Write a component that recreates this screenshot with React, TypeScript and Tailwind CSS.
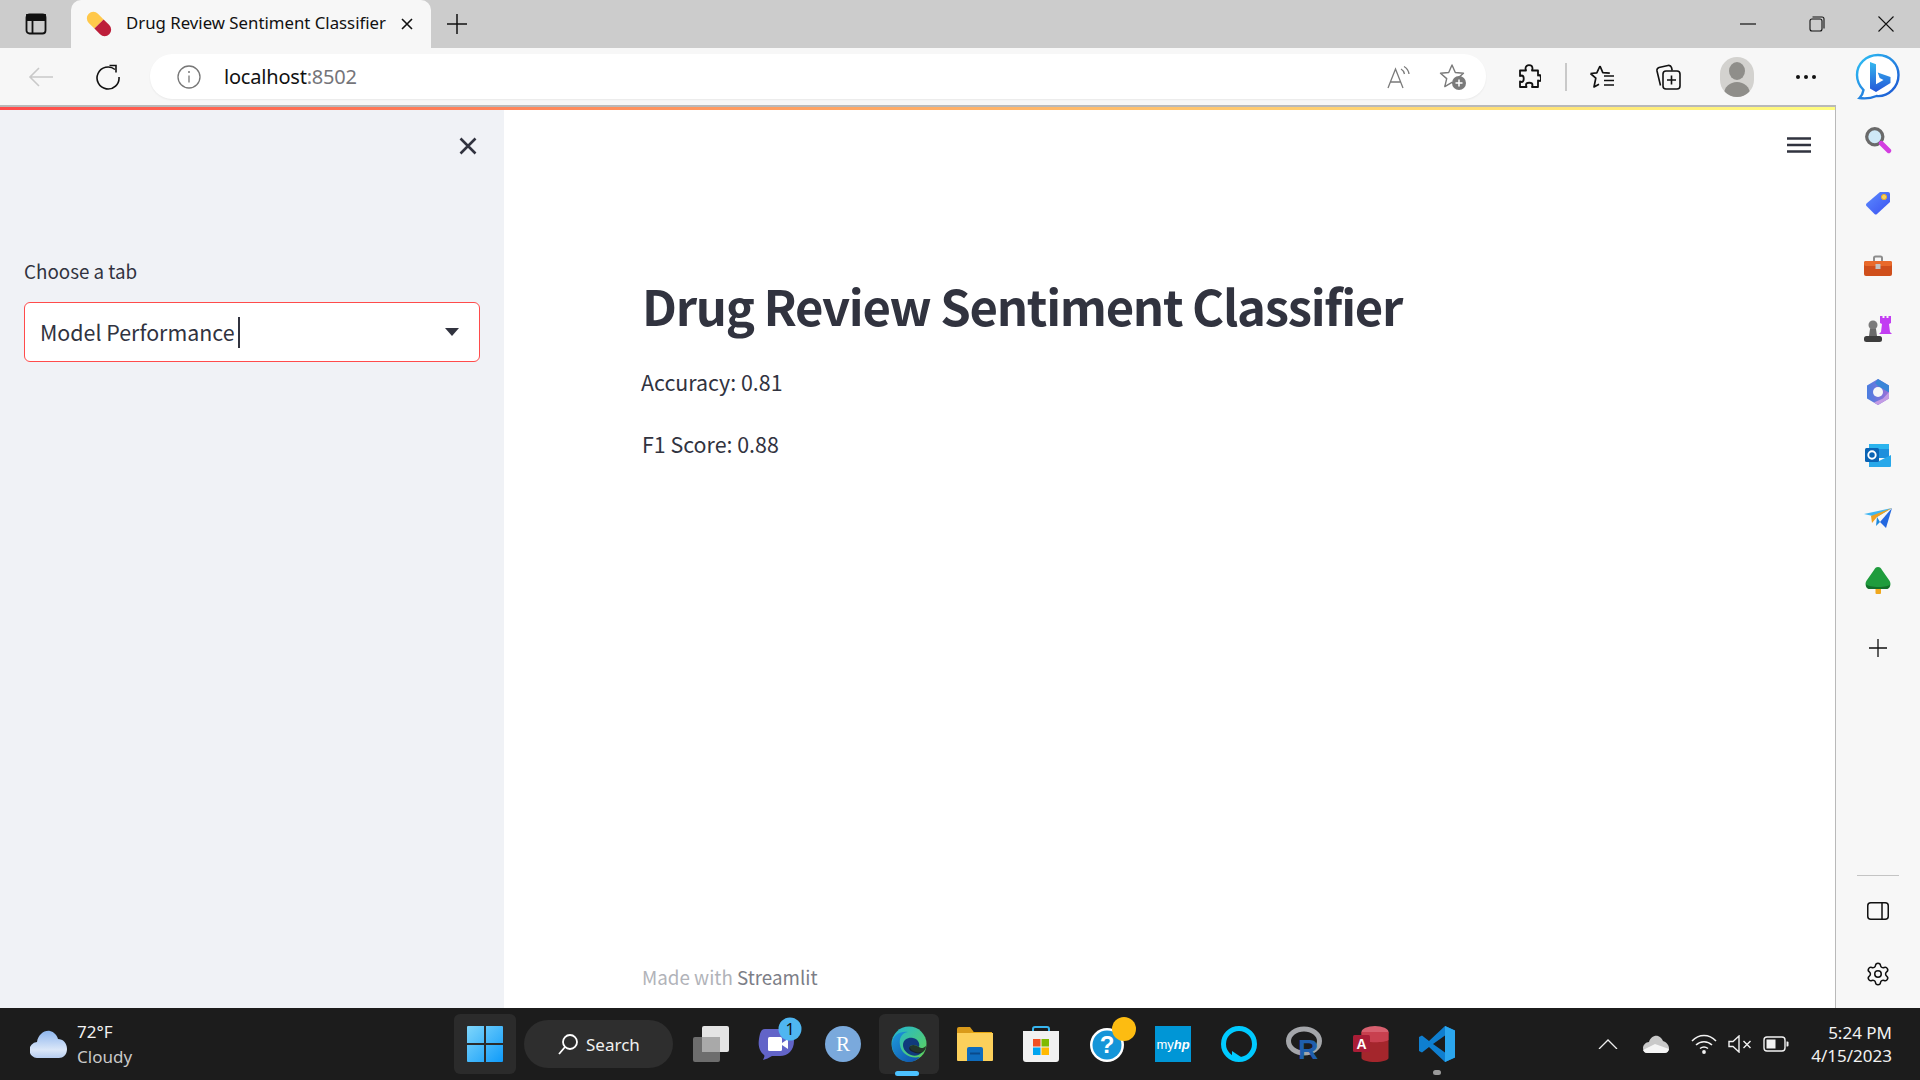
import React from "react";

const ui = "[font-family:'Noto_Sans',sans-serif]";
const st = "[font-family:'Noto_Sans_CJK_JP',sans-serif]";

function Slot({ w, children, className = "" }: { w: string; children?: React.ReactNode; className?: string }) {
  return <div className={`${w} h-full shrink-0 flex items-center justify-center relative ${className}`}>{children}</div>;
}

const Pill = () => (
  <svg width="30" height="30" viewBox="0 0 30 30">
    <g transform="rotate(-45 15 15)">
      <path d="M8.500 7a6.500 6.500 0 0 1 13 0v8h-13z" fill="#ffc84a" />
      <path d="M8.500 15h13v8a6.500 6.500 0 0 1-13 0z" fill="#bd1e3a" />
    </g>
  </svg>
);

const Bing = () => (
  <svg width="46" height="48" viewBox="0 0 46 48">
    <defs>
      <linearGradient id="bb" x1="0" y1="0" x2="1" y2="1">
        <stop offset="0" stopColor="#2fc3f5" />
        <stop offset="1" stopColor="#1b4fd0" />
      </linearGradient>
      <linearGradient id="bc" x1="0" y1="0" x2="0" y2="1">
        <stop offset="0" stopColor="#35b8ee" />
        <stop offset="1" stopColor="#2456d8" />
      </linearGradient>
    </defs>
    <path d="M23 2C11 2 2 11 2 22c0 6 2.500 11 6.500 15-.5 3-2 6-4 8 6 1 12 0 17-2 12 1 22-9 22-21C43.500 11 35 2 23 2z" fill="#fff" stroke="url(#bb)" strokeWidth="2.400" />
    <path d="M15 9l6 2.200v20l7.500-4.300-3.800-1.800-2-5.500 12.800 4.500v6L21 39l-6-3.500z" fill="url(#bc)" />
  </svg>
);

function EdgeIcon() {
  return (
    <svg width="36" height="36" viewBox="0 0 36 36">
      <defs>
        <linearGradient id="e1" x1="0" y1="0" x2="1" y2="1">
          <stop offset="0" stopColor="#1fb5d8" />
          <stop offset="1" stopColor="#64d44f" />
        </linearGradient>
        <linearGradient id="e2" x1="0" y1="0" x2="1" y2="1">
          <stop offset="0" stopColor="#1e9bdc" />
          <stop offset="1" stopColor="#0f4fa8" />
        </linearGradient>
      </defs>
      <circle cx="18" cy="18" r="17.500" fill="url(#e1)" />
      <path d="M1 17C2 8 10 5 17 6c-7 1-9 7-8 13 1 8 9 14 20 12-3 3-7 5-11 5C8 36 0 27 1 17z" fill="url(#e2)" />
      <path d="M12 19c0-6 6-8 10-7 5 1 7 5 6 9-3-2-6-3-9-1-1 2 2 5 6 6 2 1 5 0 6 0-2 3-7 5-11 3-5-2-8-6-8-10z" fill="#103a7d" />
      <path d="M19 20c3-2 6-1 9 1 2 2 5 1 7-1 0 3-2 6-5 7-3 1-6 0-8-1-3-1-5-3-3-6z" fill="#1c1c1c" opacity="0.85" />
    </svg>
  );
}

export default function App() {
  return (
    <div className={`w-[1920px] h-[1080px] flex flex-col overflow-hidden bg-white ${ui}`}>
      {/* Tab strip */}
      <div className="h-[48px] shrink-0 bg-[#cccccc] flex items-stretch">
        <Slot w="w-[71px]">
          <svg width="22" height="22" viewBox="0 0 22 22" fill="none" stroke="#111" strokeWidth="1.800">
            <rect x="1.500" y="1.500" width="19" height="19" rx="3" />
            <path d="M1.500 7h19M7.500 7v13.500" />
            <path d="M2 2h18v5H2z" fill="#111" />
          </svg>
        </Slot>
        <div className="w-[360px] shrink-0 bg-[#f7f7f7] rounded-t-[10px] flex items-center">
          <div className="ml-[13px] w-[30px] flex justify-center"><Pill /></div>
          <span className="ml-[12px] -mt-[1px] text-[16.800px] text-[#111] whitespace-nowrap leading-none w-[274px]">Drug Review Sentiment Classifier</span>
          <svg width="14" height="14" viewBox="0 0 14 14" stroke="#111" strokeWidth="1.600">
            <path d="M2 2l10 10M12 2L2 12" />
          </svg>
        </div>
        <Slot w="w-[52px]">
          <svg width="22" height="22" viewBox="0 0 22 22" stroke="#111" strokeWidth="1.500"><path d="M11 1v20M1 11h20" /></svg>
        </Slot>
        <div className="flex-1" />
        <Slot w="w-[69px]">
          <svg width="16" height="2" viewBox="0 0 16 2"><path d="M0 1h16" stroke="#111" strokeWidth="1.200" /></svg>
        </Slot>
        <Slot w="w-[69px]">
          <svg width="16" height="16" viewBox="0 0 16 16" fill="none" stroke="#111" strokeWidth="1.100">
            <rect x="1" y="3" width="12" height="12" rx="2" />
            <path d="M3.500 1h9.500a2 2 0 0 1 2 2v9.500" />
          </svg>
        </Slot>
        <Slot w="w-[69px]">
          <svg width="16" height="16" viewBox="0 0 16 16" stroke="#111" strokeWidth="1.100"><path d="M.5.5l15 15M15.500.5l-15 15" /></svg>
        </Slot>
      </div>

      {/* Toolbar */}
      <div className="h-[57px] shrink-0 bg-[#f7f7f7] flex items-center relative">
        <Slot w="w-[82px]">
          <svg width="26" height="22" viewBox="0 0 26 22" fill="none" stroke="#c9c9c9" strokeWidth="1.600"><path d="M25 11H2M11 2l-9 9 9 9" /></svg>
        </Slot>
        <Slot w="w-[52px]">
          <svg width="26" height="26" viewBox="0 0 26 26" fill="none" stroke="#111" strokeWidth="1.600">
            <path d="M20 5.500A11 11 0 1 0 24 13" />
            <path d="M14.500 1.500h6.500v7" />
          </svg>
        </Slot>
        <div className="w-[16px] shrink-0" />
        <div className="w-[1336px] h-[45px] bg-white rounded-[22px] flex items-center shrink-0 shadow-[0_1px_2px_rgba(0,0,0,0.06)]">
          <Slot w="w-[78px]">
            <svg width="24" height="24" viewBox="0 0 24 24" fill="none" stroke="#777" strokeWidth="1.300">
              <circle cx="12" cy="12" r="11" />
              <path d="M12 10.500v7" />
              <circle cx="12" cy="7" r="1" fill="#777" stroke="none" />
            </svg>
          </Slot>
          <span className="text-[20px] leading-none -ml-[4px] text-[#111] tracking-[-0.2px]">localhost<span className="text-[#75757a]">:8502</span></span>
          <div className="flex-1" />
          <Slot w="w-[54px]">
            <svg width="26" height="26" viewBox="0 0 26 26" fill="none" stroke="#7a7a7a" strokeWidth="1.300">
              <path d="M2 24L9.500 5 17 24M4.500 18h10" />
              <path d="M15 5c2 1 3 3 3.500 5M18 2.500c2.500 1.500 4.500 4 5 7.500" />
            </svg>
          </Slot>
          <Slot w="w-[53px]" className="mr-[7px]">
            <svg width="28" height="28" viewBox="0 0 28 28" fill="none">
              <path d="M13 2l3.300 7.500 8.200.7-6.200 5.400 1.900 8-7.200-4.300L5.800 23.600l1.900-8L1.500 10.200l8.200-.7z" stroke="#7a7a7a" strokeWidth="1.400" strokeLinejoin="round" />
              <circle cx="20" cy="20" r="7" fill="#7a7a7a" />
              <path d="M20 16.500v7M16.500 20h7" stroke="#fff" strokeWidth="1.500" />
            </svg>
          </Slot>
        </div>
        <Slot w="w-[43px]" className="ml-[21px]">
          <svg width="24" height="26" viewBox="0 0 24 26" fill="none" stroke="#111" strokeWidth="1.800" strokeLinejoin="round">
            <path d="M8.500 4.500c0-4.500 7-4.500 7 0 0 1-.5 1-.5 2h6v5c1 0 1-.5 2-.5v0c1 2 1 5 0 6-1 0-1-.5-2-.5v6.500h-6c0-1 .5-1 .5-2 0-3-6.500-3-6.500 0 0 1 .5 1 .5 2H3v-5.500c1 0 1 .5 1.500.5 3 0 3-6.500 0-6.500-.5 0-.5.5-1.500.5V6.500h6c0-1-.5-1-.5-2z" />
          </svg>
        </Slot>
        <div className="w-[1.500px] h-[28px] bg-[#c9c9c9] ml-[15px] shrink-0" />
        <Slot w="w-[40px]" className="ml-[15px]">
          <svg width="26" height="26" viewBox="0 0 26 26" fill="none" stroke="#111" strokeWidth="1.700" strokeLinejoin="round">
            <path d="M11 2l2.800 6.600 7 .5M1.500 9.500l6.300-.6L11 2M1.500 9.500l5.300 4.700L5 23l5-2.800" />
            <path d="M15 12h10M15 16.500h10M15 21h10" />
          </svg>
        </Slot>
        <Slot w="w-[40px]" className="ml-[26px]">
          <svg width="26" height="28" viewBox="0 0 26 28" fill="none" stroke="#111" strokeWidth="1.600">
            <rect x="8" y="8" width="17" height="18" rx="3" />
            <path d="M5.500 22.500L2 8c-.4-2 .5-3 2-3.500L13 2.500c2-.4 3 .5 3.500 2l.7 3" />
            <path d="M16.500 12.500v9M12 17h9" />
          </svg>
        </Slot>
        <Slot w="w-[40px]" className="ml-[29px]">
          <div className="w-[34px] h-[40px] rounded-full bg-[#d3d2cf] flex items-center justify-center overflow-hidden">
            <svg width="34" height="40" viewBox="0 0 34 40">
              <ellipse cx="17" cy="14" rx="8" ry="9" fill="#8f8e8a" />
              <ellipse cx="17" cy="37" rx="13" ry="12" fill="#8f8e8a" />
            </svg>
          </div>
        </Slot>
        <Slot w="w-[40px]" className="ml-[29px]">
          <svg width="22" height="6" viewBox="0 0 22 6" fill="#111"><circle cx="3" cy="3" r="2" /><circle cx="11" cy="3" r="2" /><circle cx="19" cy="3" r="2" /></svg>
        </Slot>
        <Slot w="w-[46px]" className="ml-[29px] mt-[1px]"><Bing /></Slot>
      </div>

      {/* Middle */}
      <div className="flex-1 min-h-0 flex">
        <div className="w-[1836px] shrink-0 border-t-2 border-r border-[#b9b9b9] flex flex-col">
          <div className="h-[3px] shrink-0 bg-gradient-to-r from-[#ff4b4b] to-[#fffd80]" />
          <div className={`flex-1 min-h-0 flex text-[#31333f] ${st}`}>
            <aside className="w-[504px] shrink-0 bg-[#f0f2f6] flex flex-col px-[24px]">
              <div className="flex justify-end mt-[27px] pr-[3px] h-[18px]">
                <svg width="18" height="18" viewBox="0 0 18 18" stroke="#31333f" strokeWidth="2.600"><path d="M1.500 1.500l15 15M16.500 1.500l-15 15" /></svg>
              </div>
              <label className="mt-[102px] text-[18.800px] leading-[28px]">Choose a tab</label>
              <div className="mt-[17px] h-[60px] w-[456px] bg-white rounded-[6px] border border-[#ff4b4b] flex items-center pl-[15px]">
                <span className="text-[21.400px] leading-none whitespace-nowrap -mt-[1px]">Model Performance</span>
                <div className="w-[2px] h-[31px] bg-[#31333f] ml-[3px]" />
                <div className="flex-1" />
                <svg width="14" height="8" viewBox="0 0 14 8" className="mr-[20px]"><path d="M0 0h14L7 8z" fill="#31333f" /></svg>
              </div>
            </aside>
            <main className="flex-1 min-w-0 flex flex-col pl-[138px] pr-[23px]">
              <div className="flex justify-end pr-[1px] mt-[27px] h-[16px]">
                <svg width="24" height="16" viewBox="0 0 24 16" stroke="#31333f" strokeWidth="2.400"><path d="M0 1.500h24M0 8h24M0 14.500h24" /></svg>
              </div>
              <h1 className="mt-[119px] text-[49px] leading-[66px] font-semibold whitespace-nowrap tracking-[-1.300px]">Drug Review Sentiment Classifier</h1>
              <p className="mt-[29px] text-[21.400px] leading-[30px] -ml-[1px]">Accuracy: 0.81</p>
              <p className="mt-[32px] text-[21.400px] leading-[30px]">F1 Score: 0.88</p>
              <div className="flex-1" />
              <p className="mb-[17px] text-[18.800px] leading-[28px] text-[#b1b3b9]">Made with <span className="text-[#7c7e87]">Streamlit</span></p>
            </main>
          </div>
        </div>
        {/* Edge sidebar */}
        <div className="flex-1 bg-[#f7f7f7] flex flex-col items-center">
          <div className="h-[3px]" />
          <IconRow><svg width="28" height="28" viewBox="0 0 26 26" fill="none"><circle cx="10" cy="10" r="7.500" fill="#cfe9f7" stroke="#6a6a6a" strokeWidth="3" /><path d="M16 16l7 7" stroke="#d33ee0" strokeWidth="4.500" strokeLinecap="round" /></svg></IconRow>
          <IconRow><svg width="26" height="24" viewBox="0 0 26 24"><defs><linearGradient id="t" x1="0" y1="0" x2="1" y2="1"><stop offset="0" stopColor="#5d8cff" /><stop offset="1" stopColor="#3a50f0" /></linearGradient></defs><path d="M15 1h8a2 2 0 0 1 2 2v8L12 23a2 2 0 0 1-2.500 0L1.500 15a2 2 0 0 1 0-2.500z" fill="url(#t)" /><circle cx="19" cy="6" r="2.600" fill="#f4d35e" stroke="#e8a92c" /></svg></IconRow>
          <IconRow><svg width="28" height="22" viewBox="0 0 28 22"><path d="M10 6V3a1.500 1.500 0 0 1 1.500-1.500h5A1.500 1.500 0 0 1 18 3v3" fill="none" stroke="#8d8d8d" strokeWidth="2" /><rect x="0" y="6" width="28" height="15" rx="2" fill="#cf4f1c" /><rect x="0" y="6" width="28" height="5" rx="2" fill="#e96a2b" /><rect x="11.500" y="9" width="5" height="5" fill="#c2c2c2" /></svg></IconRow>
          <IconRow><svg width="28" height="28" viewBox="0 0 28 28"><circle cx="9" cy="10" r="4.500" fill="#7b7b7b" /><path d="M6 14h6l1 7H5z" fill="#6a6a6a" /><rect x="0" y="21" width="18" height="6" rx="2.500" fill="#3d3d3d" /><path d="M16 1h2.500v2h2V1h2v2h2V1H27v7l-2 1 1 8 2 2H15l2-2 1-8-2-1z" fill="#c23df2" /></svg></IconRow>
          <IconRow><svg width="26" height="26" viewBox="0 0 26 26"><defs><linearGradient id="m1" x1="0" y1="0" x2="1" y2="0"><stop offset="0" stopColor="#4a7ee0" /><stop offset="1" stopColor="#9a6fd8" /></linearGradient></defs><path d="M13 0l11 6.500v13L13 26 2 19.500v-13z" fill="url(#m1)" /><path d="M13 0l11 6.500v7l-6-3.500-5-3-3-3z" fill="#3a86d8" /><path d="M24 13v6.500L13 26l-4-2.500 9-4z" fill="#c39be4" /><circle cx="13" cy="13" r="5" fill="#f7f7f7" /></svg></IconRow>
          <IconRow><svg width="26" height="24" viewBox="0 0 26 24"><rect x="4" y="1" width="20" height="14" fill="#1e8fdc" /><rect x="4" y="1" width="20" height="5" fill="#2bb4ee" /><path d="M4 12l10 6 12-6v11a1 1 0 0 1-1 1H4z" fill="#28a8ea" /><rect x="0" y="5" width="14" height="14" rx="1.500" fill="#0a63b4" /><circle cx="7" cy="12" r="3.700" fill="none" stroke="#fff" strokeWidth="1.900" /></svg></IconRow>
          <IconRow><svg width="28" height="20" viewBox="0 0 28 20"><path d="M0 6L28 0 13 9z" fill="#3fb6f2" /><path d="M28 0L22 20l-6-6z" fill="#2468e0" /><path d="M28 0L7 8l1 7 5-6z" fill="#f0a020" /><path d="M16 14l-4 4 1-9z" fill="#1e8ade" /></svg></IconRow>
          <IconRow><svg width="26" height="28" viewBox="0 0 26 28"><rect x="10.500" y="20" width="5.500" height="7" rx="1" fill="#f0a81e" /><path d="M13 0c2 0 3 1 4 3l7 10c3 4 1 9-3 9H5c-4 0-6-5-3-9L9 3c1-2 2-3 4-3z" fill="#1f9c3d" /><path d="M1 17c2 4 24 4 24 0 0 3-1 5-4 5H5c-3 0-4-2-4-5z" fill="#136f2a" /></svg></IconRow>
          <div className="h-[71px] flex items-center justify-center shrink-0">
            <svg width="18" height="18" viewBox="0 0 18 18" stroke="#111" strokeWidth="1.300"><path d="M9 0v18M0 9h18" /></svg>
          </div>
          <div className="flex-1" />
          <div className="w-[42px] h-px bg-[#c4c4c4] shrink-0" />
          <div className="h-[70px] flex items-center justify-center shrink-0">
            <svg width="22" height="18" viewBox="0 0 22 18" fill="none" stroke="#111" strokeWidth="1.500"><rect x=".75" y=".75" width="20.500" height="16.500" rx="3" /><path d="M15 .75v16.500" /></svg>
          </div>
          <div className="h-[56px] mb-[6px] flex items-center justify-center shrink-0">
            <svg width="26" height="26" viewBox="0 0 24 24" fill="none" stroke="#111" strokeWidth="1.400" strokeLinejoin="round"><path d="M9.671 4.136a2.340 2.340 0 0 1 4.659 0 2.340 2.340 0 0 0 3.319 1.915 2.340 2.340 0 0 1 2.330 4.033 2.340 2.340 0 0 0 0 3.831 2.340 2.340 0 0 1-2.330 4.033 2.340 2.340 0 0 0-3.319 1.915 2.340 2.340 0 0 1-4.659 0 2.340 2.340 0 0 0-3.320-1.915 2.340 2.340 0 0 1-2.330-4.033 2.340 2.340 0 0 0 0-3.831A2.340 2.340 0 0 1 6.350 6.051a2.340 2.340 0 0 0 3.319-1.915" /><circle cx="12" cy="12" r="3" /></svg>
          </div>
        </div>
      </div>

      {/* Taskbar */}
      <div className="h-[72px] shrink-0 bg-[#1c1c1c] flex items-center text-white">
        <div className="w-[454px] h-full shrink-0 flex items-center">
          <div className="ml-[29px] w-[38px] flex justify-center">
            <svg width="37" height="28" viewBox="0 0 37 28"><defs><linearGradient id="cl" x1="0" y1="0" x2="0" y2="1"><stop offset="0" stopColor="#8eb6ee" /><stop offset="0.7" stopColor="#dbe7f8" /><stop offset="1" stopColor="#b7cdf0" /></linearGradient></defs><path d="M8 28a8 8 0 0 1-1-16c1-7 7-12 13-11 4 1 7 4 8 8 5 0 9 4 9 10s-4 9-8 9z" fill="url(#cl)" /></svg>
          </div>
          <div className="ml-[10px] flex flex-col text-[17px] leading-[25px]">
            <span className="text-[#f2f2f2]">72°F</span>
            <span className="text-[#c9c9c9]">Cloudy</span>
          </div>
        </div>
        <div className="w-[62px] h-[60px] shrink-0 rounded-[6px] bg-[#2b2b2b] flex items-center justify-center">
          <svg width="36" height="36" viewBox="0 0 36 36"><defs><linearGradient id="w" x1="0" y1="0" x2="1" y2="1"><stop offset="0" stopColor="#7fd6fb" /><stop offset="1" stopColor="#0f9bfa" /></linearGradient></defs><path d="M1 0h16v17H0V1a1 1 0 0 1 1-1zM19 0h16a1 1 0 0 1 1 1v16H19zM0 19h17v17H1a1 1 0 0 1-1-1zM19 19h17v16a1 1 0 0 1-1 1H19z" fill="url(#w)" /></svg>
        </div>
        <div className="ml-[8px] w-[149px] h-[48px] shrink-0 rounded-full bg-[#2e2e2e] flex items-center pl-[33px]">
          <svg width="22" height="22" viewBox="0 0 22 22" fill="none" stroke="#fff" strokeWidth="1.800"><circle cx="13" cy="9" r="7" /><path d="M8 14l-6 7" /></svg>
          <span className="ml-[7px] text-[17px] leading-none text-[#f0f0f0]">Search</span>
        </div>
        <div className="ml-[5px] flex h-full shrink-0">
          <TB>
            <svg width="36" height="36" viewBox="0 0 36 36"><rect x="0" y="11" width="27" height="25" rx="2" fill="#6d6d6d" /><rect x="9" y="0" width="27" height="26" rx="2" fill="#e4e4e4" /><rect x="9" y="11" width="18" height="15" fill="#a9a9a9" /></svg>
          </TB>
          <TB>
            <svg width="44" height="46" viewBox="0 0 44 46" className="relative -top-[4px] left-[2px] overflow-visible"><path d="M8 12h20c6 0 9 5 9 12 0 9-6 15-14 15h-8c-3 2-6 3-9 4 1-2 2-4 1-5-5-4-6-10-5-16 1-6 2-10 6-10z" fill="#6264c8" /><rect x="11" y="20" width="14" height="14" rx="1.500" fill="#fff" /><path d="M25 26l6-4v10l-6-4z" fill="#fff" /><circle cx="33" cy="12" r="11.500" fill="#4fb6f1" /><text x="33" y="18" textAnchor="middle" fontSize="16" fill="#111" fontFamily="Noto Sans">1</text></svg>
          </TB>
          <TB>
            <svg width="36" height="36" viewBox="0 0 36 36" className="overflow-visible"><circle cx="18" cy="18" r="18" fill="#7aa9dc" /><text x="18" y="25" textAnchor="middle" fontSize="21" fill="#fff" fontFamily="Liberation Serif">R</text></svg>
          </TB>
          <div className="w-[66px] h-full shrink-0 flex items-center justify-center relative">
            <div className="w-[60px] h-[60px] rounded-[6px] bg-[#2b2b2b] flex items-center justify-center"><EdgeIcon /></div>
            <div className="absolute bottom-[4px] left-[19px] w-[24px] h-[5px] rounded-full bg-[#4cc2ff]" />
          </div>
          <TB>
            <svg width="36" height="34" viewBox="0 0 36 34"><path d="M1 2h12l4 3h18v28a1 1 0 0 1-1 1H1z" fill="#e8a70f" /><path d="M0 6h36v27a1 1 0 0 1-1 1H1a1 1 0 0 1-1-1z" fill="#fcd05b" /><path d="M0 2a2 2 0 0 1 2-2h11l3 4-3 2H0z" fill="#d99a1a" /><path d="M10 22a2 2 0 0 1 2-2h12a2 2 0 0 1 2 2v12H10z" fill="#0f6cbd" /><path d="M13 26.500h10" stroke="#0a4a8a" strokeWidth="2" /></svg>
          </TB>
          <TB>
            <svg width="36" height="36" viewBox="0 0 36 36"><path d="M10 8V3a2 2 0 0 1 2-2h12a2 2 0 0 1 2 2v5" fill="none" stroke="#37b5ef" strokeWidth="2" /><path d="M0 5h36v28a3 3 0 0 1-3 3H3a3 3 0 0 1-3-3z" fill="#f1f1f1" /><rect x="10" y="13" width="7.500" height="7.500" fill="#f25022" /><rect x="18.500" y="13" width="7.500" height="7.500" fill="#7fba00" /><rect x="10" y="21.500" width="7.500" height="7.500" fill="#00a4ef" /><rect x="18.500" y="21.500" width="7.500" height="7.500" fill="#ffb900" /></svg>
          </TB>
          <TB>
            <svg width="46" height="46" viewBox="0 0 46 46" className="relative -top-[4px] left-[6px] overflow-visible"><circle cx="17" cy="28" r="17" fill="#fff" /><circle cx="17" cy="28" r="14.500" fill="#1595d8" /><text x="17" y="36" textAnchor="middle" fontSize="24" fontWeight="700" fill="#fff" fontFamily="Liberation Sans">?</text><circle cx="34" cy="12" r="12" fill="#fdbc11" /></svg>
          </TB>
          <TB>
            <div className="w-[36px] h-[36px] bg-[#0096d6] flex items-center justify-center">
              <span className="text-[13px] text-white leading-none [font-family:'Liberation_Sans',sans-serif]">my<b className="italic">hp</b></span>
            </div>
          </TB>
          <TB>
            <svg width="36" height="36" viewBox="0 0 36 36" fill="none"><ellipse cx="18" cy="18" rx="15.500" ry="15.500" stroke="#00caff" strokeWidth="5" /><path d="M11 33l9-2-9-6z" fill="#00caff" /></svg>
          </TB>
          <TB>
            <svg width="36" height="36" viewBox="0 0 36 36" className="overflow-visible"><ellipse cx="17" cy="15" rx="15.500" ry="12" fill="none" stroke="#a4a6aa" strokeWidth="5" /><text x="21" y="33" textAnchor="middle" fontSize="28" fontWeight="700" fill="#1f5fad" fontFamily="Liberation Sans">R</text></svg>
          </TB>
          <TB>
            <svg width="36" height="36" viewBox="0 0 36 36" className="overflow-visible"><ellipse cx="22" cy="6" rx="13.500" ry="6" fill="#d7606f" /><path d="M8.500 6h27v26c0 2-6 4-13.500 4S8.500 34 8.500 32z" fill="#a4262c" /><path d="M8.500 14c3 3 24 3 27 0v-8h-27z" fill="#c8404f" /><rect x="0" y="9" width="17" height="17" rx="1.500" fill="#a91d36" /><text x="8.500" y="23" textAnchor="middle" fontSize="14" fontWeight="700" fill="#fff" fontFamily="Liberation Sans">A</text></svg>
          </TB>
          <div className="w-[66px] h-full shrink-0 flex items-center justify-center relative">
            <svg width="36" height="36" viewBox="0 0 36 36"><path d="M26 0l10 4.500v27L26 36 10 21 3 26.500 0 25V11l3-1.500L10 15z" fill="#0f7fd0" /><path d="M26 0l10 4.500v27L26 36z" fill="#2ba6ee" /><path d="M26 9.500L14 18l12 8.500z" fill="#1c1c1c" /></svg>
            <div className="absolute bottom-[5px] left-[29px] w-[8px] h-[5px] rounded-full bg-[#9b9b9b]" />
          </div>
        </div>
        <div className="flex-1" />
        <Slot w="w-[40px]" className="mr-[8px]">
          <svg width="20" height="10" viewBox="0 0 20 10" fill="none" stroke="#eee" strokeWidth="1.300"><path d="M1 10l9-9 9 9" /></svg>
        </Slot>
        <Slot w="w-[40px]" className="mr-[8px]">
          <svg width="26" height="18" viewBox="0 0 26 18"><path d="M6 7c1-4 5-7 9-6 3 1 4 3 5 5 3 1 6 4 6 7 0 3-2 5-5 5H4c-2 0-4-2-4-5 0-3 3-6 6-6z" fill="#c9c9c9" /><path d="M0 15l12-6 14 5c-1 3-2 4-5 4H4c-2 0-3-1-4-3z" fill="#f5f5f5" /></svg>
        </Slot>
        <Slot w="w-[40px]">
          <svg width="26" height="20" viewBox="0 0 26 20" fill="none" stroke="#f2f2f2" strokeWidth="1.500"><path d="M1 7c7-7.500 17-7.500 24 0M5 11c4.500-4.500 11.500-4.500 16 0M9 14.500c2.500-2 5.500-2 8 0" /><circle cx="13" cy="18" r="1.900" fill="#f2f2f2" stroke="none" /></svg>
        </Slot>
        <Slot w="w-[31px]">
          <svg width="24" height="18" viewBox="0 0 24 18" fill="none" stroke="#f2f2f2" strokeWidth="1.400"><path d="M1 6.500h4L11 1v16l-6-5.500H1zM15.500 6l7 7M22.500 6l-7 7" /></svg>
        </Slot>
        <Slot w="w-[42px]" className="mr-[14px]">
          <svg width="26" height="16" viewBox="0 0 26 16" fill="none"><rect x="1" y="1" width="21" height="14" rx="3" stroke="#f2f2f2" strokeWidth="1.400" /><rect x="3.500" y="3.500" width="9" height="9" fill="#f2f2f2" /><path d="M23.500 5.500h1a1 1 0 0 1 1 1v3a1 1 0 0 1-1 1h-1z" fill="#f2f2f2" /></svg>
        </Slot>
        <div className="flex flex-col items-end text-[17px] leading-[23px] text-[#f2f2f2] mr-[28px] whitespace-nowrap">
          <span>5:24 PM</span>
          <span>4/15/2023</span>
        </div>
      </div>
    </div>
  );
}

function IconRow({ children }: { children: React.ReactNode }) {
  return <div className="h-[63px] flex items-center justify-center shrink-0">{children}</div>;
}

function TB({ children }: { children: React.ReactNode }) {
  return <div className="w-[66px] h-full shrink-0 flex items-center justify-center relative">{children}</div>;
}
